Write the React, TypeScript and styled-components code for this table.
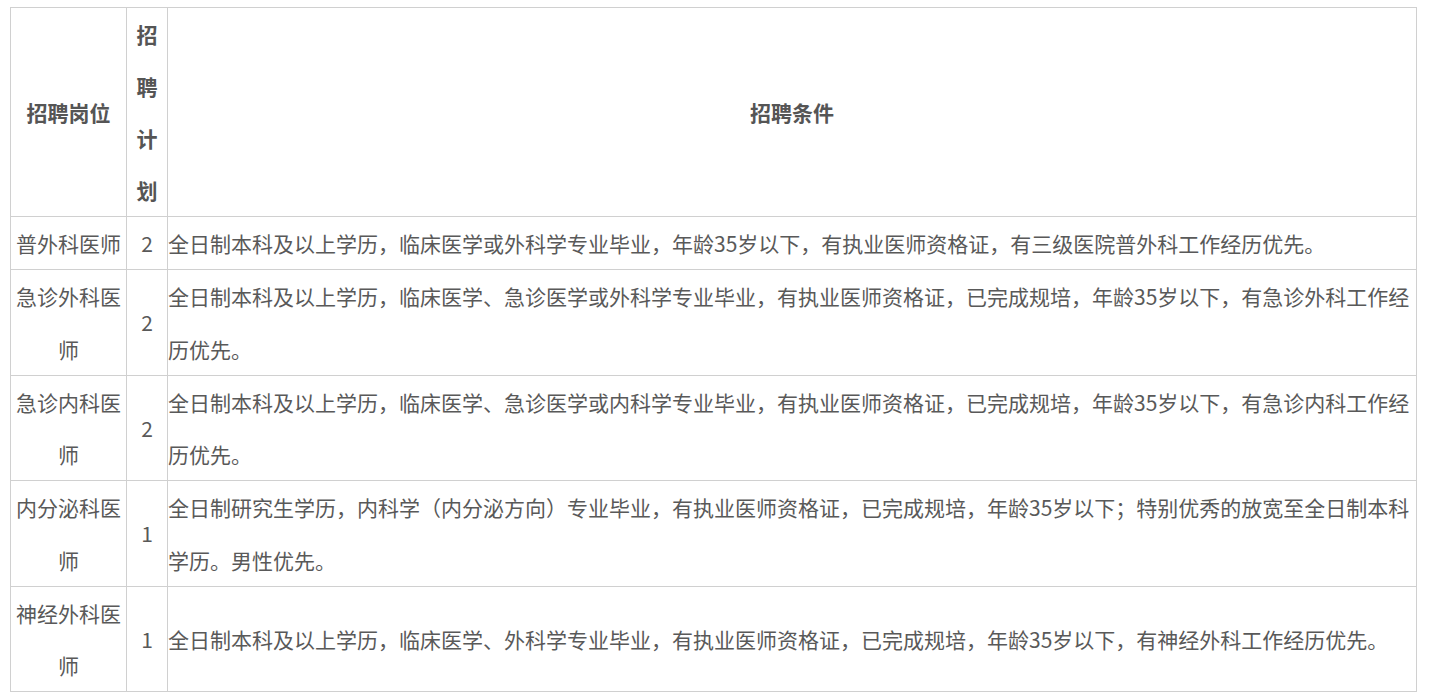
import React from 'react';
import styled, { createGlobalStyle } from 'styled-components';

const GlobalStyle = createGlobalStyle`
  body {
    margin: 0;
    background: #fff;
    font-family: 'Microsoft YaHei', 'Noto Sans CJK SC', 'Noto Sans', sans-serif;
  }
`;

const Page = styled.div`
  padding: 7px 12px 8px 10px;
`;

const Table = styled.table`
  width: 1407px;
  border-collapse: collapse;
  table-layout: fixed;
  color: #595959;
  font-size: 21px;
`;

const HeadCell = styled.th`
  border: 1px solid #d0d0d0;
  padding: 0;
  line-height: 52px;
  font-weight: bold;
  color: #555;
  text-align: center;
  vertical-align: middle;
`;

const Cell = styled.td<{ $align?: 'left' | 'center' }>`
  border: 1px solid #d0d0d0;
  padding: 0;
  line-height: 52.25px;
  text-align: ${p => p.$align ?? 'center'};
  vertical-align: middle;
  word-break: break-all;
`;

interface Post {
  title: string;
  count: number;
  terms: string;
}

const posts: Post[] = [
  {
    title: '普外科医师',
    count: 2,
    terms: '全日制本科及以上学历，临床医学或外科学专业毕业，年龄35岁以下，有执业医师资格证，有三级医院普外科工作经历优先。',
  },
  {
    title: '急诊外科医师',
    count: 2,
    terms: '全日制本科及以上学历，临床医学、急诊医学或外科学专业毕业，有执业医师资格证，已完成规培，年龄35岁以下，有急诊外科工作经历优先。',
  },
  {
    title: '急诊内科医师',
    count: 2,
    terms: '全日制本科及以上学历，临床医学、急诊医学或内科学专业毕业，有执业医师资格证，已完成规培，年龄35岁以下，有急诊内科工作经历优先。',
  },
  {
    title: '内分泌科医师',
    count: 1,
    terms: '全日制研究生学历，内科学（内分泌方向）专业毕业，有执业医师资格证，已完成规培，年龄35岁以下；特别优秀的放宽至全日制本科学历。男性优先。',
  },
  {
    title: '神经外科医师',
    count: 1,
    terms: '全日制本科及以上学历，临床医学、外科学专业毕业，有执业医师资格证，已完成规培，年龄35岁以下，有神经外科工作经历优先。',
  },
];

const App: React.FC = () => (
  <Page>
    <GlobalStyle />
    <Table>
      <colgroup>
        <col style={{ width: 116 }} />
        <col style={{ width: 41 }} />
        <col />
      </colgroup>
      <thead>
        <tr>
          <HeadCell>招聘岗位</HeadCell>
          <HeadCell>招聘计划</HeadCell>
          <HeadCell>招聘条件</HeadCell>
        </tr>
      </thead>
      <tbody>
        {posts.map(p => (
          <tr key={p.title}>
            <Cell>{p.title}</Cell>
            <Cell>{p.count}</Cell>
            <Cell $align="left">{p.terms}</Cell>
          </tr>
        ))}
      </tbody>
    </Table>
  </Page>
);

export default App;
